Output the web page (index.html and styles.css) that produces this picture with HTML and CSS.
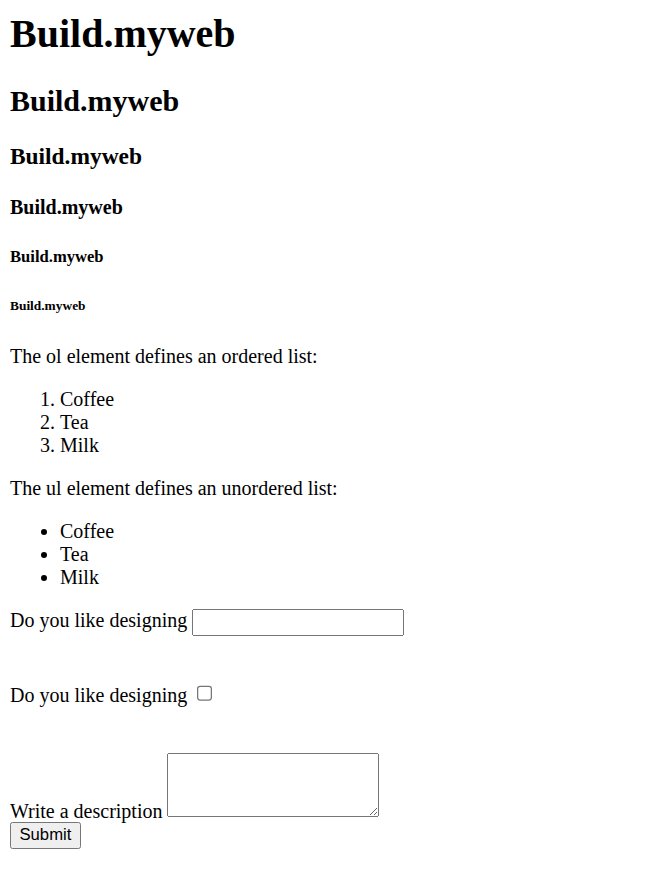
FILE: index.html
```html
<!DOCTYPE html>
<html class="page">
<head>
<meta charset="utf-8">
<title>Build.myweb</title>
<link rel="stylesheet" href="styles.css">
</head>
<body class="doc">
<h1 class="title">Build.myweb</h1>
<h2>Build.myweb</h2>
<h3>Build.myweb</h3>
<h4>Build.myweb</h4>
<h5>Build.myweb</h5>
<h6>Build.myweb</h6>
<p>The ol element defines an ordered list:</p>
<ol>
  <li>Coffee</li>
  <li>Tea</li>
  <li>Milk</li>
</ol>
<p>The ul element defines an unordered list:</p>
<ul>
  <li>Coffee</li>
  <li>Tea</li>
  <li>Milk</li>
</ul>
<form class="form" onsubmit="return false">
  <label for="q1">Do you like designing</label>
  <input id="q1" class="field" type="text"><br><br><br>
  <label for="q2">Do you like designing</label>
  <input id="q2" type="checkbox"><br><br><br>
  <label for="q3">Write a description</label>
  <textarea id="q3" class="area"></textarea><br>
  <input class="btn" type="submit" value="Submit">
</form>
</body>
</html>
```
FILE: styles.css
```css
.page {
  zoom: 1.25;
}
.doc {
  margin: 8px;
  font-family: "Liberation Serif", "Times New Roman", serif;
  color: #000;
  background: #fff;
}
.title {
  margin-top: 0;
}
.field {
  box-sizing: border-box;
  width: 169.6px;
  height: 21px;
  font-family: "Liberation Sans", Arial, sans-serif;
}
.area {
  box-sizing: border-box;
  width: 169.6px;
  height: 51.6px;
  font-family: "Liberation Mono", monospace;
}
.btn {
  font-family: "Liberation Sans", Arial, sans-serif;
}
```
